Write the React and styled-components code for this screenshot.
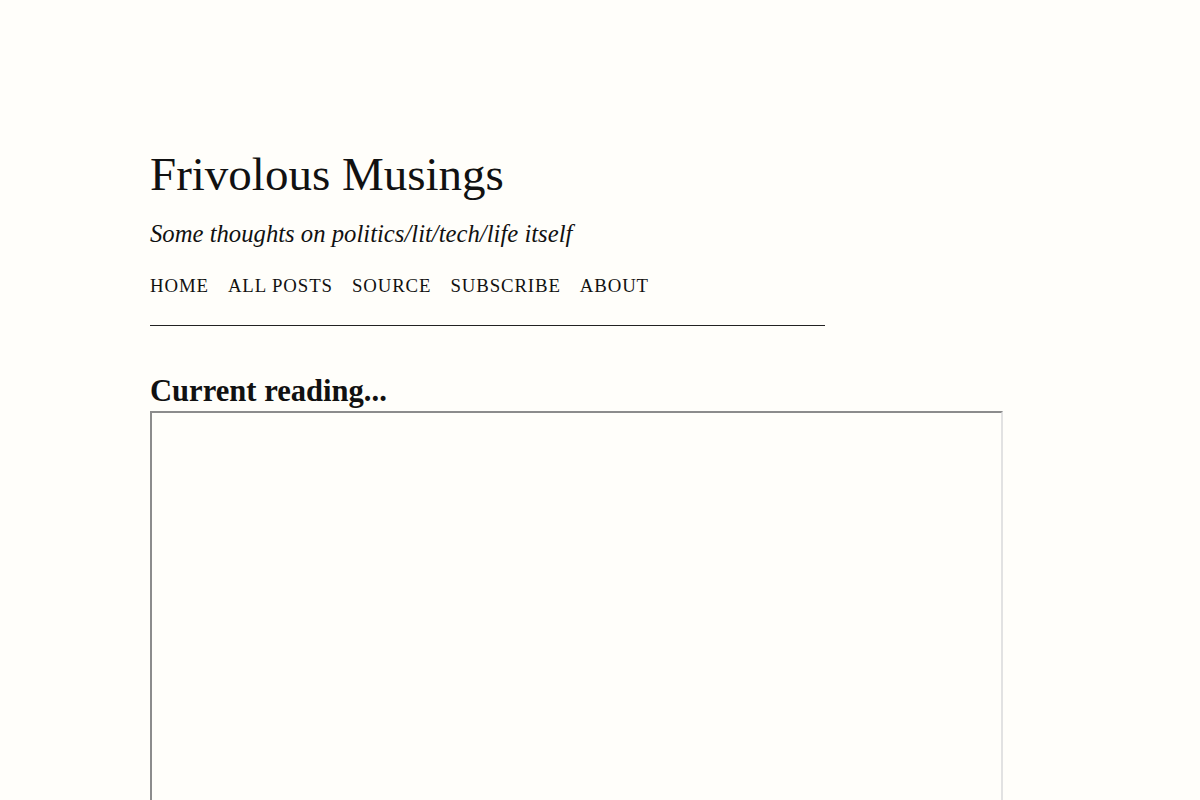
import styled, { createGlobalStyle } from "styled-components";

const GlobalStyle = createGlobalStyle`
    html, body {
        margin: 0;
        padding: 0;
        background-color: #fffefa;
        color: #111;
        font-family: "Liberation Serif", "Times New Roman", serif;
    }
`;

const Page = styled.div`
    padding: 140px 0 0 150px;
`;

const Header = styled.header`
    width: 675px;
    border-bottom: 1px solid #222;
    padding-bottom: 27px;
`;

const Title = styled.h1`
    margin: 0;
    font-size: 47px;
    font-weight: normal;
    line-height: 68px;
`;

const Tagline = styled.p`
    margin: 8px 0 0;
    font-size: 24.7px;
    font-style: italic;
    line-height: 36px;
`;

const Nav = styled.nav`
    display: flex;
    gap: 19px;
    margin-top: 22px;
`;

const NavLink = styled.a`
    color: #111;
    text-decoration: none;
    text-transform: uppercase;
    font-size: 18.8px;
    letter-spacing: 0.9px;
    line-height: 24px;
`;

const Section = styled.section`
    margin-top: 45px;
`;

const Heading = styled.h2`
    margin: 0;
    font-size: 30.6px;
    font-weight: bold;
    line-height: 40px;
`;

const Frame = styled.div`
    width: 849px;
    height: 600px;
    border-style: solid;
    border-width: 2px;
    border-color: #8c8c8c #e2e2e2 #e2e2e2 #8c8c8c;
`;

export default function App() {
    return (
        <>
            <GlobalStyle />
            <Page>
                <Header>
                    <Title>Frivolous Musings</Title>
                    <Tagline>Some thoughts on politics/lit/tech/life itself</Tagline>
                    <Nav>
                        <NavLink href="#">Home</NavLink>
                        <NavLink href="#">All posts</NavLink>
                        <NavLink href="#">Source</NavLink>
                        <NavLink href="#">Subscribe</NavLink>
                        <NavLink href="#">About</NavLink>
                    </Nav>
                </Header>
                <Section>
                    <Heading>Current reading...</Heading>
                    <Frame />
                </Section>
            </Page>
        </>
    );
}
